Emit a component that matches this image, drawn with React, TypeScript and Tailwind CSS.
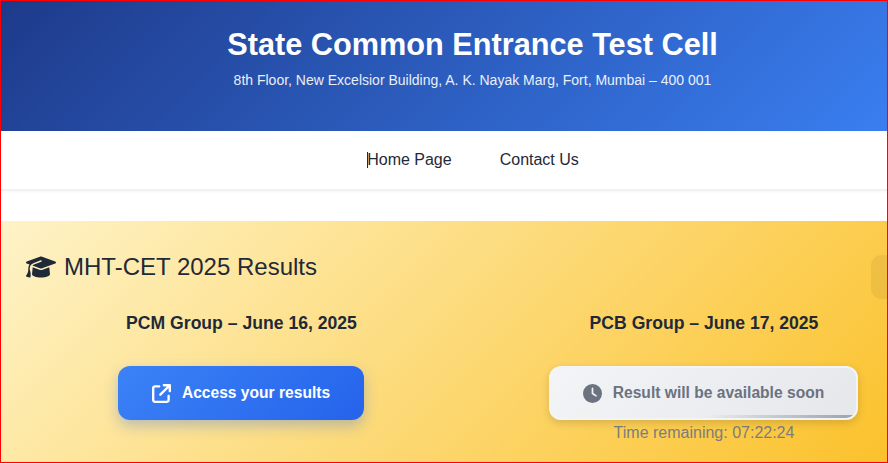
import { FaArrowUpRightFromSquare, FaClock, FaGraduationCap } from "react-icons/fa6";

export default function App() {
  return (
    <div className="relative h-[463px] w-[888px] overflow-hidden border border-[#ff0000] bg-white font-['Liberation_Sans',Arial,sans-serif] text-[#1f2937]">
      <div className="w-[943px]">
        {/* Header */}
        <header className="flex h-[130px] flex-col items-center bg-[linear-gradient(135deg,#1e3a8a,#3b82f6)] pt-[25px] text-white">
          <h1 className="text-[30.7px] leading-[38px] font-bold">State Common Entrance Test Cell</h1>
          <p className="mt-[8px] text-[14px] leading-[16px] opacity-90">
            8th Floor, New Excelsior Building, A. K. Nayak Marg, Fort, Mumbai – 400 001
          </p>
        </header>

        {/* Nav */}
        <nav className="flex h-[60px] items-start justify-center gap-[48px] border-b-2 border-[#f1f2f4] pt-[21px] pl-[1px] text-[16px] shadow-[0_1px_3px_rgba(0,0,0,0.04)]">
          <a className="relative leading-[16px]">
            {/* text caret */}
            <span className="absolute top-0 left-0 h-[16px] w-px bg-[#1f2937]" />
            Home Page
          </a>
          <a className="leading-[16px]">Contact Us</a>
        </nav>

        {/* Results */}
        <section className="mt-[30px] h-[241px] bg-[linear-gradient(135deg,#fef3c7,#fbbf24)]">
          <h2 className="flex items-center gap-[8px] pt-[32px] pl-[25px] text-[24px] leading-[28px] font-normal">
            <FaGraduationCap className="h-[24px] w-[30px]" />
            MHT-CET 2025 Results
          </h2>

          <div className="mt-[31px] grid grid-cols-[480px_445px]">
            <div className="flex flex-col items-center">
              <h3 className="pl-[1px] text-[17.6px] leading-[22px] font-bold">PCM Group – June 16, 2025</h3>
              <button className="mt-[32px] flex h-[54px] w-[246px] items-center justify-center gap-[11px] rounded-[12px] bg-[linear-gradient(135deg,#3b82f6,#2563eb)] text-[15.6px] font-bold text-white shadow-[0_6px_14px_rgba(37,99,235,0.3)]">
                <FaArrowUpRightFromSquare className="h-[19px] w-[19px]" />
                Access your results
              </button>
            </div>

            <div className="flex flex-col items-center">
              <h3 className="pl-[1px] text-[17.6px] leading-[22px] font-bold">PCB Group – June 17, 2025</h3>
              <button className="relative mt-[32px] flex h-[54px] w-[309px] items-center justify-center gap-[11px] overflow-hidden rounded-[12px] border-2 border-[#f3f4f6] bg-[linear-gradient(135deg,#f3f4f6,#e5e7eb)] text-[15.6px] font-bold text-[#6b7280] shadow-[0_3px_8px_rgba(0,0,0,0.15)]">
                <FaClock className="h-[19px] w-[19px]" />
                Result will be available soon
                <span className="absolute right-0 bottom-0 h-[3px] w-[150px] bg-gradient-to-r from-transparent to-[#9ca3af]" />
              </button>
              <p className="mt-[3px] pl-[1px] text-[16px] leading-[19px] text-[#7b7d80]">Time remaining: 07:22:24</p>
            </div>
          </div>
        </section>
      </div>

      {/* Side tab */}
      <div className="absolute top-[254px] right-0 h-[44px] w-[16px] rounded-l-[10px] bg-black/5" />
    </div>
  );
}
